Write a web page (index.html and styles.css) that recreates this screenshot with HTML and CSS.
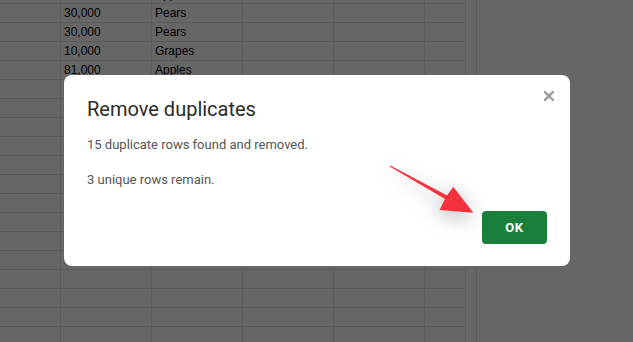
FILE: index.html
```html
<!DOCTYPE html>
<html>
<head>
<meta charset="utf-8">
<link rel="stylesheet" href="styles.css">
</head>
<body>
<div class="sheet">
  <div class="grid">
    <div class="row"><div class="c"></div><div class="c">20,000</div><div class="c">Apples</div><div class="c"></div><div class="c"></div><div class="c"></div></div>
    <div class="row"><div class="c"></div><div class="c">30,000</div><div class="c">Pears</div><div class="c"></div><div class="c"></div><div class="c"></div></div>
    <div class="row"><div class="c"></div><div class="c">30,000</div><div class="c">Pears</div><div class="c"></div><div class="c"></div><div class="c"></div></div>
    <div class="row"><div class="c"></div><div class="c">10,000</div><div class="c">Grapes</div><div class="c"></div><div class="c"></div><div class="c"></div></div>
    <div class="row"><div class="c"></div><div class="c">81,000</div><div class="c">Apples</div><div class="c"></div><div class="c"></div><div class="c"></div></div>
    <div class="row"><div class="c"></div><div class="c"></div><div class="c"></div><div class="c"></div><div class="c"></div><div class="c"></div></div>
    <div class="row"><div class="c"></div><div class="c"></div><div class="c"></div><div class="c"></div><div class="c"></div><div class="c"></div></div>
    <div class="row"><div class="c"></div><div class="c"></div><div class="c"></div><div class="c"></div><div class="c"></div><div class="c"></div></div>
    <div class="row"><div class="c"></div><div class="c"></div><div class="c"></div><div class="c"></div><div class="c"></div><div class="c"></div></div>
    <div class="row"><div class="c"></div><div class="c"></div><div class="c"></div><div class="c"></div><div class="c"></div><div class="c"></div></div>
    <div class="row"><div class="c"></div><div class="c"></div><div class="c"></div><div class="c"></div><div class="c"></div><div class="c"></div></div>
    <div class="row"><div class="c"></div><div class="c"></div><div class="c"></div><div class="c"></div><div class="c"></div><div class="c"></div></div>
    <div class="row"><div class="c"></div><div class="c"></div><div class="c"></div><div class="c"></div><div class="c"></div><div class="c"></div></div>
    <div class="row"><div class="c"></div><div class="c"></div><div class="c"></div><div class="c"></div><div class="c"></div><div class="c"></div></div>
    <div class="row"><div class="c"></div><div class="c"></div><div class="c"></div><div class="c"></div><div class="c"></div><div class="c"></div></div>
    <div class="row"><div class="c"></div><div class="c"></div><div class="c"></div><div class="c"></div><div class="c"></div><div class="c"></div></div>
    <div class="row"><div class="c"></div><div class="c"></div><div class="c"></div><div class="c"></div><div class="c"></div><div class="c"></div></div>
    <div class="row"><div class="c"></div><div class="c"></div><div class="c"></div><div class="c"></div><div class="c"></div><div class="c"></div></div>
    <div class="row"><div class="c"></div><div class="c"></div><div class="c"></div><div class="c"></div><div class="c"></div><div class="c"></div></div>
  </div>
  <div class="scroll"></div>
</div>

<div class="scrim"></div>

<div class="dialog">
  <div class="dialog-head">
    <h2 class="dialog-title">Remove duplicates</h2>
    <button class="close" aria-label="Close">
      <svg width="10" height="10" viewBox="0 0 10 10"><path d="M1 1L9 9M9 1L1 9" stroke="#9a9a9a" stroke-width="2.4" stroke-linecap="square"/></svg>
    </button>
  </div>
  <p class="dialog-text">15 duplicate rows found and removed.</p>
  <p class="dialog-text">3 unique rows remain.</p>
  <div class="dialog-foot">
    <button class="ok">OK</button>
  </div>
</div>

<svg class="arrow" width="110" height="70" viewBox="0 0 110 70">
  <polygon points="10.3,10.4 67,40.5 73.3,31.7 93.3,57.7 59.5,55 65,44 9.7,11.6" fill="#f5313b"/>
</svg>
</body>
</html>
```

FILE: styles.css
```css
html, body {
  margin: 0;
  padding: 0;
  width: 633px;
  height: 342px;
  overflow: hidden;
  background: #ffffff;
}

.sheet {
  display: flex;
  margin-top: -15px;
}

.grid {
  display: flex;
  flex-direction: column;
}

.row {
  display: grid;
  grid-template-columns: 61px 91px 91px 91px 91px 41px;
}

.c {
  box-sizing: border-box;
  height: 19px;
  border-right: 1px solid #e0e0e0;
  border-bottom: 1px solid #e0e0e0;
  padding-left: 3px;
  font-family: "Liberation Sans", Arial, sans-serif;
  font-size: 12px;
  line-height: 18px;
  color: #000;
  white-space: nowrap;
  overflow: hidden;
}

.scroll {
  width: 10px;
  border-right: 1px solid #e0e0e0;
  flex: none;
}

.scrim {
  position: fixed;
  inset: 0;
  background: rgba(0, 0, 0, 0.6);
}

.dialog {
  position: fixed;
  left: 64px;
  top: 75px;
  width: 506px;
  height: 191px;
  box-sizing: border-box;
  background: #fff;
  border-radius: 8px;
  padding: 16px 23px 22px 23px;
  display: flex;
  flex-direction: column;
  font-family: Roboto, "Noto Sans", sans-serif;
}

.dialog-head {
  display: flex;
  justify-content: space-between;
  align-items: flex-start;
}

.dialog-title {
  margin: 6px 0 0 0;
  font-size: 20px;
  line-height: 24px;
  font-weight: 400;
  color: #2a2a2a;
}

.close {
  margin: 0 -7px 0 0;
  padding: 0;
  border: 0;
  background: none;
  width: 10px;
  height: 10px;
  display: flex;
}

.dialog-text {
  margin: 15px 0 0 0;
  font-size: 13px;
  line-height: 20px;
  color: #555;
}

.dialog-head + .dialog-text {
  margin-top: 14px;
}

.dialog-foot {
  margin-top: auto;
  display: flex;
  justify-content: flex-end;
}

.ok {
  width: 65px;
  height: 33px;
  border: 0;
  border-radius: 4px;
  background: #1a7f3a;
  color: #fff;
  font-family: Roboto, "Noto Sans", sans-serif;
  font-weight: 700;
  font-size: 13px;
  letter-spacing: 0.6px;
  padding: 0;
}

.arrow {
  position: fixed;
  left: 380px;
  top: 155px;
  filter: drop-shadow(0 5px 10px rgba(0, 0, 0, 0.3));
  overflow: visible;
}
```
